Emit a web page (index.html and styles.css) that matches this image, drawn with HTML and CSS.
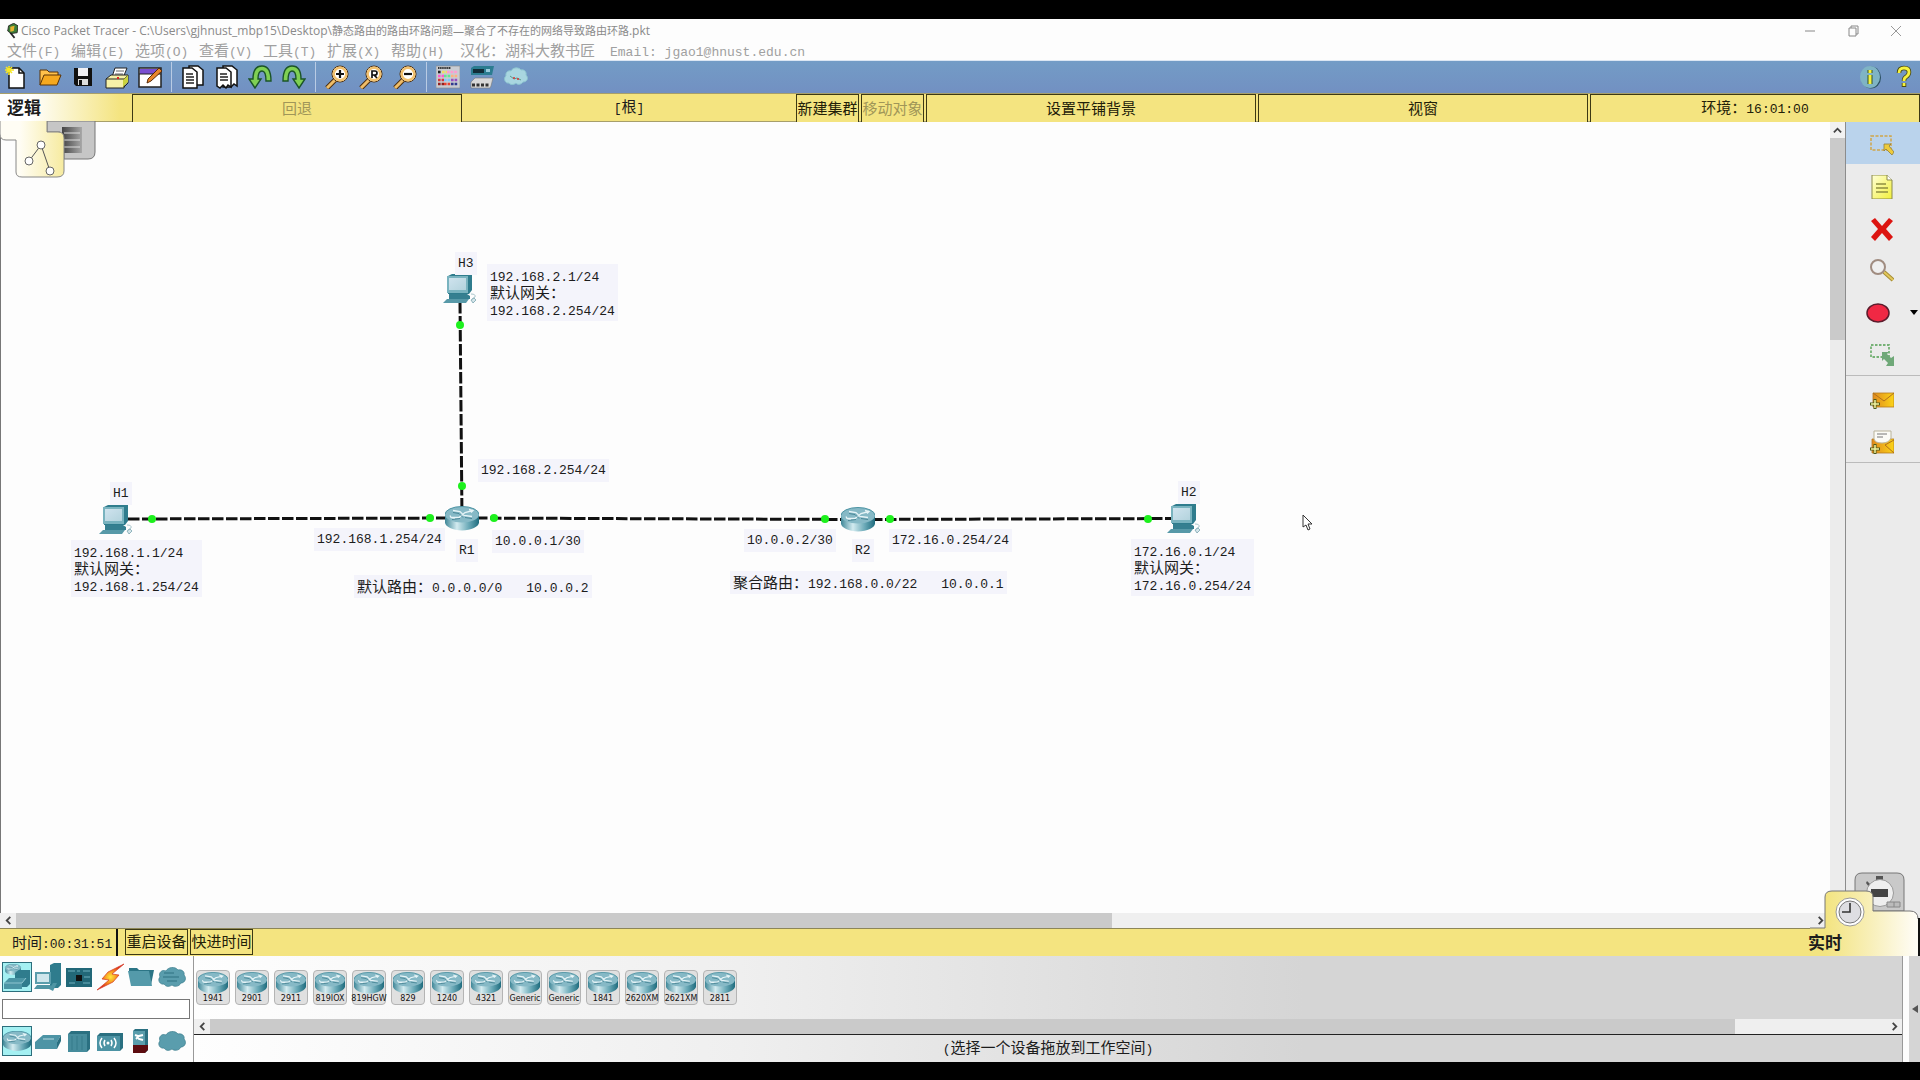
FILE: index.html
```html
<!DOCTYPE html>
<html lang="zh-CN">
<head>
<meta charset="utf-8">
<title>Cisco Packet Tracer</title>
<link rel="stylesheet" href="styles.css">
</head>
<body>
<svg class="defs" aria-hidden="true">
  <defs>
    <linearGradient id="teal" x1="0" x2="1" y1="0" y2="0"><stop offset="0" stop-color="#3f8798"/><stop offset=".35" stop-color="#d3ebf0"/><stop offset=".7" stop-color="#6aa9b7"/><stop offset="1" stop-color="#1f6c7e"/></linearGradient>
    <linearGradient id="screen" x1="0" x2="1" y1="0" y2="1"><stop offset="0" stop-color="#cfe3ee"/><stop offset="1" stop-color="#b3d3dd"/></linearGradient>
    <linearGradient id="note" x1="0" x2="1" y1="0" y2="1"><stop offset="0" stop-color="#ffffd8"/><stop offset="1" stop-color="#f2f03a"/></linearGradient>
    <linearGradient id="mail" x1="0" x2="1" y1="0" y2="0"><stop offset="0" stop-color="#e08a1e"/><stop offset="1" stop-color="#fbd418"/></linearGradient>
    <radialGradient id="spark"><stop offset="0" stop-color="#ffe93a"/><stop offset=".5" stop-color="#f58a1c"/><stop offset="1" stop-color="#d9251c"/></radialGradient>
    <linearGradient id="tabLeft" gradientUnits="userSpaceOnUse" x1="20" x2="66" y1="0" y2="0"><stop offset="0" stop-color="#fffdf4"/><stop offset="1" stop-color="#f6ea9c"/></linearGradient>
    <linearGradient id="tabRight" gradientUnits="userSpaceOnUse" x1="1825" x2="1915" y1="0" y2="0"><stop offset="0" stop-color="#f3e480"/><stop offset=".5" stop-color="#f8efb8"/><stop offset="1" stop-color="#fefcf4"/></linearGradient>
    <linearGradient id="stack" x1="0" x2="1" y1="0" y2="0"><stop offset="0" stop-color="#444"/><stop offset="1" stop-color="#a8a8a8"/></linearGradient>
  </defs>
  <symbol id="router" viewBox="0 0 34 24">
    <path d="M0 8v8c0 4 8 8 17 8s17-4 17-8V8z" fill="url(#teal)"/>
    <ellipse cx="17" cy="8" rx="17" ry="8" fill="#86b9c6"/>
    <path d="M0 8a17 8 0 0 1 34 0" fill="none" stroke="#4c93a3"/>
    <path d="M8 4l7 1 4 4 8 1M6 11l8 0 6-5 8-2M24 3l4 1-2 2M5 9l1 2 4 1" fill="none" stroke="#e6f4f7" stroke-width="1.300"/>
    <path d="M8 6l6 1 4 4M20 11l7 1M7 13l8-1" fill="none" stroke="#39798a" stroke-width=".8"/>
  </symbol>
  <symbol id="pc" viewBox="0 0 34 30">
    <path d="M5 2l4-2h20v16l-3 4H5z" fill="#2f7c8d"/>
    <path d="M4 2h21v17H4z" fill="#79b3bf"/>
    <path d="M6 4h17v12H6z" fill="url(#screen)"/>
    <path d="M6 20h18l3 2v3H6z" fill="#357f90"/>
    <path d="M4 25h22l-3 4H0z" fill="#5799a8"/>
    <path d="M28 20q5 0 4 3l-3 2" fill="none" stroke="#a9c6cc"/><path d="M28 26l3-2 2 2-3 3z" fill="#d5e6ea" stroke="#6b9ba6" stroke-width=".7"/>
  </symbol>
  <symbol id="cloud" viewBox="0 0 28 20"><path d="M6 17C2 18-1 13 2 10 0 6 4 2 8 4c2-4 9-5 12-1 4-1 7 2 6 5 3 3 1 8-3 8-2 4-7 4-9 2-3 2-6 2-8-1z" fill="#5a9dad" stroke="#3a7d8d" stroke-width=".7"/></symbol>
  <symbol id="glass" viewBox="0 0 24 24"><path d="M11 14L2 23" stroke="#4c2d0c" stroke-width="5"/><path d="M11 14L2 23" stroke="#efbd68" stroke-width="3"/><circle cx="15" cy="9" r="8" fill="#fff" stroke="#4c2d0c"/><circle cx="15" cy="9" r="6.300" fill="#fff" stroke="#f2c16d" stroke-width="2.400"/></symbol>
  <symbol id="turn" viewBox="0 0 24 24"><path d="M7 23L1 14h4c0-9 3-13 9-13s9 5 9 15h-5c0-7-1-10-4-10s-4 3-4 8h3z" fill="#7fd053" stroke="#1b5428" stroke-width="1.400"/></symbol>
</svg>

<div class="app">
  <header class="titlebar">
    <svg class="logo" viewBox="0 0 14 18"><path d="M3 3l6-3 5 3-1 8-7 1-4-3z" fill="#3d7d37" stroke="#222"/><path d="M5 4l5-1-1 6-4 1z" fill="#e8b530"/><path d="M5 11l5 6" stroke="#222" stroke-width="2"/></svg>
    <h1 class="title">Cisco Packet Tracer - C:\Users\gjhnust_mbp15\Desktop\<span class="title-cjk">静态路由的路由环路问题—聚合了不存在的网络导致路由环路</span>.pkt</h1>
    <div class="controls">
      <button aria-label="最小化"><svg viewBox="0 0 12 12"><path d="M1 6h10" stroke="#888"/></svg></button>
      <button aria-label="还原"><svg viewBox="0 0 12 12"><path d="M2 3h7v8H2zM4 3V1h7v8H9" fill="none" stroke="#888"/></svg></button>
      <button aria-label="关闭"><svg viewBox="0 0 12 12"><path d="M1 1l10 10M11 1L1 11" stroke="#999"/></svg></button>
    </div>
  </header>

  <nav class="menubar">
    <button>文件<span class="m">(F)</span></button>
    <button>编辑<span class="m">(E)</span></button>
    <button>选项<span class="m">(O)</span></button>
    <button>查看<span class="m">(V)</span></button>
    <button>工具<span class="m">(T)</span></button>
    <button>扩展<span class="m">(X)</span></button>
    <button>帮助<span class="m">(H)</span></button>
    <button class="credit">汉化：湖科大教书匠</button>
    <button class="email"><span class="m">Email: jgao1@hnust.edu.cn</span></button>
  </nav>

  <div class="toolbar">
    <div class="group g5">
      <button aria-label="新建"><svg viewBox="0 0 24 24"><path d="M5 3h10l5 5v15H5z" fill="#fff" stroke="#111" stroke-width="1.500"/><path d="M15 3v5h5" fill="none" stroke="#111" stroke-width="1.500"/><path d="M5 1v9M1 5h9M2 2l6 6M8 2L2 8" stroke="#f7e823" stroke-width="1.600"/></svg></button>
      <button aria-label="打开"><svg viewBox="0 0 24 24"><path d="M2 20V5h7l2 2h9v4" fill="#ffc14b" stroke="#5a3206"/><path d="M2 20l4-10h17l-4 10z" fill="#f6a91f" stroke="#5a3206"/></svg></button>
      <button aria-label="保存"><svg viewBox="0 0 24 24"><path d="M3 3h18v18H5l-2-2z" fill="#111"/><path d="M7 3h10v8H7z" fill="#f0f0f4"/><path d="M7 14h10v6H7z" fill="#ddd"/><path d="M8 15h3v5H8z" fill="#111"/></svg></button>
      <button aria-label="打印"><svg viewBox="0 0 24 24"><path d="M7 12l3-9h12l-4 10" fill="#fff" stroke="#222"/><path d="M11 6h8M10 9h8" stroke="#666"/><path d="M1 14l5-4h17l-4 5v8H1z" fill="#f6f1a8" stroke="#222"/><path d="M1 14h18v8M19 14l4-4v8l-4 4" fill="none" stroke="#222"/><path d="M18 15l5-5v7l-5 5z" fill="#c9d13c"/><path d="M12 13h2" stroke="#d22" stroke-width="2"/></svg></button>
      <button aria-label="活动向导"><svg viewBox="0 0 24 24"><path d="M1 3h22v19H1z" fill="#fff" stroke="#222" stroke-width="1.500"/><path d="M2 4h20v5H2z" fill="#7a4fd0"/><path d="M1 9h22" stroke="#222"/><path d="M21 3L10 14l-1 4 4-2L24 6z" fill="#e8872c" stroke="#5a2a08"/></svg></button>
    </div>
    <span class="sep"></span>
    <div class="group g4">
      <button aria-label="复制"><svg viewBox="0 0 24 24"><path d="M8 1h9l5 4v15H8z" fill="#fff" stroke="#111" stroke-width="1.500"/><path d="M2 3h9l5 4v16H2z" fill="#fff" stroke="#111" stroke-width="1.500"/><path d="M5 9h7M5 12h8M5 15h8M5 18h8" stroke="#222" stroke-width="1.300"/></svg></button>
      <button aria-label="粘贴"><svg viewBox="0 0 24 24"><path d="M8 1h9l5 4v16l-3-2-3 3H8z" fill="#fff" stroke="#111" stroke-width="1.500"/><path d="M2 3h9l5 4v15l-3-2-2 3-3-3-3 3-3-2z" fill="#fff" stroke="#111" stroke-width="1.500"/><path d="M5 9h7M5 12h8M5 15h8" stroke="#222" stroke-width="1.300"/></svg></button>
      <button aria-label="撤销"><svg viewBox="0 0 24 24"><use href="#turn"/></svg></button>
      <button aria-label="重做"><svg viewBox="0 0 24 24"><use href="#turn" transform="translate(24 0) scale(-1 1)"/></svg></button>
    </div>
    <span class="sep"></span>
    <div class="group g3">
      <button aria-label="放大"><svg viewBox="0 0 24 24"><use href="#glass"/><path d="M15 5v8M11 9h8" stroke="#111" stroke-width="2.200"/></svg></button>
      <button aria-label="缩放重置"><svg viewBox="0 0 24 24"><use href="#glass"/><path d="M13 13V6h3q2 0 2 2t-2 2h-3M15 10l3 3" fill="none" stroke="#111" stroke-width="1.700"/></svg></button>
      <button aria-label="缩小"><svg viewBox="0 0 24 24"><use href="#glass"/><path d="M11 9h8" stroke="#111" stroke-width="2.200"/></svg></button>
    </div>
    <span class="sep"></span>
    <div class="group g3">
      <button aria-label="调色板"><svg viewBox="0 0 24 24"><path d="M0 1h24v22H0z" fill="#c9ccd2" stroke="#888" stroke-width=".6"/><path d="M2 3h13" stroke="#333" stroke-width="2" stroke-dasharray="1.500 .6"/><g stroke-width="2.600" stroke-dasharray="2.600 1"><path d="M2 7h3" stroke="#222"/><path d="M6 7h5" stroke="#f0e060"/><path d="M11 7h11" stroke="#ff9ad0"/><path d="M2 11h6" stroke="#ff5ad0"/><path d="M8 11h7" stroke="#60e890"/><path d="M15 11h7" stroke="#ffb080"/><path d="M2 15h6" stroke="#d03a3a"/><path d="M8 15h7" stroke="#7bc8ff"/><path d="M15 15h7" stroke="#9a50c0"/><path d="M2 19h6" stroke="#902020"/><path d="M8 19h7" stroke="#e84030"/><path d="M15 19h7" stroke="#303a90"/></g></svg></button>
      <button aria-label="自定义设备"><svg viewBox="0 0 24 24"><path d="M1 3l3-2h20l-2 9H1z" fill="#2b7c90"/><path d="M3 4h11v4H3z" fill="#112c38"/><path d="M16 4h4v3h-4z" fill="#9cd"/><path d="M1 17l4-4h18l-2 8-1 2H1z" fill="#d8d8d8" stroke="#777" stroke-width=".6"/><path d="M2 20h17" stroke="#333" stroke-width="3" stroke-dasharray="3 1.500"/></svg></button>
      <button aria-label="云"><svg viewBox="0 0 24 24"><path d="M5 18c-4 1-6-5-3-7-1-4 3-6 5-5 2-4 8-4 10-1 3-1 6 2 5 5 3 3 1 7-3 7-2 3-6 3-7 1-2 2-6 2-7 0z" fill="#a9d6e0" stroke="#8cc4d0"/><path d="M6 11l4 3 3-1 4 2" fill="none" stroke="#5a9a8a"/><circle cx="10" cy="13" r="1" fill="#d33"/><circle cx="14" cy="14" r="1" fill="#d33"/></svg></button>
    </div>
    <div class="help">
      <button aria-label="信息"><svg viewBox="0 0 24 24"><ellipse cx="13" cy="12.500" rx="10" ry="11" fill="#2a5060"/><ellipse cx="12" cy="12" rx="10" ry="11" fill="#7fb4c4"/><path d="M12 5v3M12 10v9" stroke="#33502a" stroke-width="5"/><path d="M12 5v3M12 10v9" stroke="#f4f23a" stroke-width="3"/></svg></button>
      <button aria-label="帮助"><svg viewBox="0 0 24 24"><g fill="none"><path d="M7 8q0-5 5-5t5 4q0 3-3 5-2 1-2 4M12 18v4" stroke="#4a4a14" stroke-width="4.500"/><path d="M7 8q0-5 5-5t5 4q0 3-3 5-2 1-2 4M12 18v3" stroke="#f6f23e" stroke-width="2.800"/></g></svg></button>
    </div>
  </div>

  <nav class="viewbar">
    <strong class="mode">逻辑</strong>
    <button class="box" disabled>回退</button>
    <span class="root"><span class="m">[</span>根<span class="m">]</span></span>
    <button class="box">新建集群</button>
    <button class="box" disabled>移动对象</button>
    <button class="box">设置平铺背景</button>
    <button class="box">视窗</button>
    <button class="box">环境：<span class="m">16:01:00</span></button>
  </nav>

  <div class="stage">
    <main class="work">
      <section class="canvas">
        <svg class="links" viewBox="0 122 1829 791" preserveAspectRatio="xMinYMin slice">
          <g stroke="#111" stroke-width="3" stroke-dasharray="11.500 2.500" fill="none">
            <path d="M128 519L462 518"/><path d="M462 518L857 519.500"/><path d="M857 519.500L1180 518.500"/><path d="M460 302L462 518"/>
          </g>
          <g fill="#1df01d"><circle cx="152" cy="519" r="4"/><circle cx="430" cy="518" r="4"/><circle cx="494" cy="518" r="4"/><circle cx="825" cy="519" r="4"/><circle cx="890" cy="519" r="4"/><circle cx="1148" cy="519" r="4"/><circle cx="460" cy="325" r="4"/><circle cx="462" cy="486" r="4"/></g>
          <use href="#pc" x="443" y="274" width="34" height="30"/>
          <use href="#pc" x="99" y="505" width="34" height="30"/>
          <use href="#pc" x="1167" y="504" width="34" height="30"/>
          <use href="#router" x="445" y="506" width="34" height="25"/>
          <use href="#router" x="841" y="507" width="34" height="25"/>
          <path d="M1303 515v12l3-2 2 5 2-1-2-5h4z" fill="#fff" stroke="#333"/>
        </svg>
        <div class="label h3 m">H3</div>
        <div class="label h3-ip"><span class="m">192.168.2.1/24</span><br>默认网关：<br><span class="m">192.168.2.254/24</span></div>
        <div class="label r1-up m">192.168.2.254/24</div>
        <div class="label h1 m">H1</div>
        <div class="label h1-ip"><span class="m">192.168.1.1/24</span><br>默认网关：<br><span class="m">192.168.1.254/24</span></div>
        <div class="label r1-left m">192.168.1.254/24</div>
        <div class="label r1 m">R1</div>
        <div class="label r1-right m">10.0.0.1/30</div>
        <div class="label r1-route"><span>默认路由：<span class="m">0.0.0.0/0</span></span><span class="m">10.0.0.2</span></div>
        <div class="label r2-left m">10.0.0.2/30</div>
        <div class="label r2 m">R2</div>
        <div class="label r2-right m">172.16.0.254/24</div>
        <div class="label r2-route"><span>聚合路由：<span class="m">192.168.0.0/22</span></span><span class="m">10.0.0.1</span></div>
        <div class="label h2 m">H2</div>
        <div class="label h2-ip"><span class="m">172.16.0.1/24</span><br>默认网关：<br><span class="m">172.16.0.254/24</span></div>
      </section>
      <div class="vscroll">
        <button aria-label="向上"><svg viewBox="0 0 10 10"><path d="M1 7l4-4 4 4" fill="none" stroke="#444" stroke-width="2"/></svg></button>
        <div class="thumb"></div>
      </div>
      <div class="hscroll">
        <button aria-label="向左"><svg viewBox="0 0 10 10"><path d="M7 1L3 5l4 4" fill="none" stroke="#444" stroke-width="2"/></svg></button>
        <div class="rail"><div class="thumb"></div></div>
        <button aria-label="向右"><svg viewBox="0 0 10 10"><path d="M3 1l4 4-4 4" fill="none" stroke="#444" stroke-width="2"/></svg></button>
      </div>
      <aside class="tools">
        <button class="on" aria-label="选择"><svg viewBox="0 0 24 24"><path d="M1 3h20v14H1z" fill="none" stroke="#d0a64a" stroke-width="1.500" stroke-dasharray="3 1.500"/><path d="M14 11h7l-2 2 5 6-2 3-6-6-2 2z" fill="#eecb3c" stroke="#8f7d3c" stroke-width=".8"/></svg></button>
        <button aria-label="便签"><svg viewBox="0 0 24 24"><path d="M2 0h15l5 5v19H2z" fill="url(#note)" stroke="#8b8b4a"/><path d="M17 0v5h5" fill="#fff" stroke="#8b8b4a"/><path d="M6 9h10M6 13h12M6 17h12" stroke="#8f8f40" stroke-width="1.300"/></svg></button>
        <button aria-label="删除"><svg viewBox="0 0 24 24"><path d="M1 4l4-3 7 8 7-8 4 3-7 8 7 8-4 4-7-8-7 8-4-4 7-8z" fill="#dc1410"/></svg></button>
        <button aria-label="查看"><svg viewBox="0 0 24 24"><path d="M14 13l9 8" stroke="#a58c33" stroke-width="4"/><path d="M14 13l9 8" stroke="#e3c85c" stroke-width="2"/><circle cx="8" cy="8" r="7" fill="#efefef" stroke="#a08c80" stroke-width="2"/></svg></button>
        <button class="shape" aria-label="画图"><svg viewBox="0 0 24 24"><ellipse cx="12" cy="12" rx="11" ry="9" fill="#f02844" stroke="#5c1c2c" stroke-width="1.500"/></svg><svg class="caret" viewBox="0 0 8 5"><path d="M0 0h8L4 5z"/></svg></button>
        <button aria-label="调整大小"><svg viewBox="0 0 24 24"><path d="M1 2h18v12H1z" fill="none" stroke="#76b276" stroke-width="1.800" stroke-dasharray="2.500 1.500"/><path d="M12 9h7l-2 2 4 4 3-2v10h-8l2-3-4-4-2 2z" fill="#6fa878"/></svg></button>
        <hr>
        <button aria-label="简单报文"><svg viewBox="0 0 24 24"><path d="M3 5h21v14H3z" fill="url(#mail)" stroke="#b57a1c" stroke-width=".8"/><path d="M3 5l11 8 10-8" fill="none" stroke="#b06f1d"/><path d="M5 11v10M0 16h10" stroke="#4c5a1c" stroke-width="3"/><path d="M5 12v8M1 16h8" stroke="#f3f3a0" stroke-width="1.500"/></svg></button>
        <button aria-label="复杂报文"><svg viewBox="0 0 24 24"><path d="M2 9h22v14H2z" fill="url(#mail)" stroke="#b57a1c" stroke-width=".8"/><path d="M4 1h17v7q-2 5-9 5T4 9z" fill="#fbfbf6" stroke="#b9b39a"/><path d="M7 4h10M7 7h6" stroke="#777"/><path d="M24 10l-9 5 9 8" fill="none" stroke="#b06f1d"/><path d="M5 14v10M0 19h10" stroke="#4c5a1c" stroke-width="3"/><path d="M5 15v8M1 19h8" stroke="#f3f3a0" stroke-width="1.500"/></svg></button>
        <hr>
      </aside>
    </main>

    <div class="timebar">
      <span class="clock">时间<span class="m">:00:31:51</span></span>
      <button class="box">重启设备</button>
      <button class="box">快进时间</button>
      <strong class="live">实时</strong>
    </div>

    <svg class="tab-left" viewBox="0 121 100 60">
      <path d="M47 121v11h13l4 5v22h24q7 0 7-7v-31z" fill="#c6c6c6" stroke="#777"/>
      <path d="M62 127h20v26H62z" fill="url(#stack)"/><path d="M64 133h16M64 140h16M64 147h16" stroke="#ddd"/>
      <path d="M0 121v13q0 6 6 6h10v32q0 5 6 5h35q7 0 7-6v-33q0-6-6-6H47v-11z" fill="url(#tabLeft)"/>
      <path d="M0 121v13q0 6 6 6h10v32q0 5 6 5h35q7 0 7-6v-33q0-6-6-6H47v-11" fill="none" stroke="#888"/>
      <path d="M41 145L29 161M41 145l9 26" stroke="#555"/><g fill="#fff" stroke="#666"><circle cx="41" cy="145" r="4"/><circle cx="29" cy="161" r="4"/><circle cx="50" cy="171" r="4"/></g>
    </svg>

    <svg class="tab-right" viewBox="1810 870 110 86">
      <path d="M1855 911v-31q0-7 7-7h35q7 0 7 7v31z" fill="#c9c9c9" stroke="#777"/>
      <path d="M1876 876h7v5h-7zM1867 881l4 4-2 2-3-4z" fill="#555"/>
      <circle cx="1880" cy="893" r="13.500" fill="#eee" stroke="#999"/><path d="M1871 889h17v8h-17z" fill="#444"/><path d="M1887 902h13v5h-13zM1894 902v5" fill="#bbb" stroke="#888"/>
      <path d="M1810 928h15v-31q0-6 7-6h34q7 0 7 6v14h37q8 0 8 8v37h-108z" fill="url(#tabRight)"/>
      <path d="M1810 928h15v-31q0-6 7-6h34q7 0 7 6v14h37q8 0 8 8" fill="none" stroke="#777"/>
      <path d="M1919 918v38" stroke="#111" stroke-width="2"/>
      <circle cx="1850" cy="912" r="14" fill="#fff" stroke="#999"/><circle cx="1850" cy="912" r="11" fill="#dedee2" stroke="#777"/><path d="M1850 903v9h-8" fill="none" stroke="#333" stroke-width="1.600"/>
    </svg>
  </div>

  <footer class="dock">
    <div class="kinds">
      <div class="row">
        <button class="on" aria-label="网络设备"><svg viewBox="0 0 28 28"><use href="#router" x="1" y="1" width="18" height="11"/><path d="M12 10l4-3h11v14l-3 3H12z" fill="#2f7c8d"/><path d="M1 20l5-5h17l-4 5v6H1z" fill="#4b95a5"/><path d="M1 20h18l4-5" fill="none" stroke="#8fc4cf"/></svg></button>
        <button aria-label="终端设备"><svg viewBox="0 0 28 28"><path d="M16 2l4-2h7v22l-3 3h-8z" fill="#2f7c8d"/><path d="M1 9h16v12H1z" fill="#5a9dac"/><path d="M3 11h12v8H3z" fill="#cfe6ec"/><path d="M3 22h13l2 2-3 2H0zM15 26l4-6h4l-4 8z" fill="#4f95a4"/></svg></button>
        <button aria-label="组件"><svg viewBox="0 0 28 28"><path d="M1 5h26v19H1z" fill="#226878"/><path d="M3 8h7M18 8h7M4 20h6M19 14h6M18 20h7M12 8h3" stroke="#6fb0be"/><path d="M11 12h6v6h-6z" fill="#111"/></svg></button>
        <button aria-label="连接"><svg viewBox="0 0 28 28"><path d="M28 1L12 9 6 16l7 1L1 27l16-8 6-7-7-1z" fill="url(#spark)" stroke="#d43a22" stroke-width=".7"/></svg></button>
        <button aria-label="杂项"><svg viewBox="0 0 28 28"><path d="M2 8V5h8l2 2h15l-3 15z" fill="#2c7586"/><path d="M1 8h21l3 15H4z" fill="#549aaa"/></svg></button>
        <button aria-label="多用户连接"><svg viewBox="0 0 28 28"><use href="#cloud" x="0" y="4" width="28" height="20"/><path d="M6 10h10M5 14h16M9 18h10" stroke="#2f7282" stroke-width="1.200"/></svg></button>
      </div>
      <input type="text" aria-label="搜索设备">
      <div class="row">
        <button class="on" aria-label="路由器"><svg viewBox="0 0 28 28"><use href="#router" x="0" y="4" width="28" height="20"/></svg></button>
        <button aria-label="交换机"><svg viewBox="0 0 28 28"><path d="M1 15l8-7h18l-4 7v7H1z" fill="#4d94a5"/><path d="M23 15l4-7v6l-4 8z" fill="#2a7081"/><path d="M9 12h11" stroke="#b7dae2"/></svg></button>
        <button aria-label="集线器"><svg viewBox="0 0 28 28"><path d="M3 7l3-3h19v18l-3 3H3z" fill="#2a7081"/><path d="M3 7h19v18H3z" fill="#468c9c"/><path d="M7 9v14M12 9v14M17 9v14" stroke="#357a8a"/></svg></button>
        <button aria-label="无线设备"><svg viewBox="0 0 28 28"><path d="M1 9l3-3h23v15l-3 3H1z" fill="#2a7081"/><path d="M1 9h23v15H1z" fill="#4c93a4"/><path d="M6 11q-4 5 0 10M9 13q-2 3 0 6M18 11q4 5 0 10M15 13q2 3 0 6" fill="none" stroke="#fff" stroke-width="1.500"/><circle cx="12" cy="16" r="1.500" fill="#fff"/></svg></button>
        <button aria-label="安全设备"><svg viewBox="0 0 28 28"><path d="M6 4l2-2h13v21l-3 3H6z" fill="#2a7081"/><path d="M6 4h12v14H6z" fill="#5a9dac"/><path d="M6 18h15v5l-3 3H6z" fill="#5c0c10"/><path d="M8 8l3 1 1 3 4 1M9 12l3-3 4-1" fill="none" stroke="#fff" stroke-width="2"/></svg></button>
        <button aria-label="广域网"><svg viewBox="0 0 28 28"><use href="#cloud" x="0" y="4" width="28" height="20"/></svg></button>
      </div>
    </div>
    <div class="tray">
      <div class="devices">
        <button><svg><use href="#router"/></svg>1941</button>
        <button><svg><use href="#router"/></svg>2901</button>
        <button><svg><use href="#router"/></svg>2911</button>
        <button><svg><use href="#router"/></svg>819IOX</button>
        <button><svg><use href="#router"/></svg>819HGW</button>
        <button><svg><use href="#router"/></svg>829</button>
        <button><svg><use href="#router"/></svg>1240</button>
        <button><svg><use href="#router"/></svg>4321</button>
        <button><svg><use href="#router"/></svg>Generic</button>
        <button><svg><use href="#router"/></svg>Generic</button>
        <button><svg><use href="#router"/></svg>1841</button>
        <button><svg><use href="#router"/></svg>2620XM</button>
        <button><svg><use href="#router"/></svg>2621XM</button>
        <button><svg><use href="#router"/></svg>2811</button>
      </div>
      <div class="hscroll">
        <button aria-label="向左"><svg viewBox="0 0 10 10"><path d="M7 1L3 5l4 4" fill="none" stroke="#444" stroke-width="2"/></svg></button>
        <div class="rail wide"><div class="thumb"></div></div>
        <button aria-label="向右"><svg viewBox="0 0 10 10"><path d="M3 1l4 4-4 4" fill="none" stroke="#444" stroke-width="2"/></svg></button>
      </div>
      <p class="status"><span class="m">(</span>选择一个设备拖放到工作空间<span class="m">)</span></p>
    </div>
    <button class="expand" aria-label="展开"><svg viewBox="0 0 6 8"><path d="M6 0v8L0 4z" fill="#555"/></svg></button>
  </footer>
</div>
</body>
</html>
```
FILE: styles.css
```css
* { box-sizing: border-box; }

body {
  margin: 0;
  background: #000;
  color: #1c1c1c;
  font: 15px/18px "Liberation Sans", "Noto Sans CJK SC", sans-serif;
}

button {
  padding: 0;
  border: 0;
  background: none;
  color: inherit;
  font: inherit;
  white-space: nowrap;
}

svg { display: block; }
.defs { position: absolute; width: 0; height: 0; }
.m { font-family: "Liberation Mono", "Noto Sans CJK SC", monospace; font-size: 13px; }

.app {
  display: flex;
  flex-direction: column;
  min-height: 100vh;
  padding: 19px 0 18px;
}

/* title and menus */
.titlebar {
  display: flex;
  align-items: center;
  height: 23px;
  padding: 0 14px 0 6px;
  background: #fdfdfd;
  color: #8a8a8a;
}
.logo { width: 12px; height: 16px; }
.title {
  flex: 1;
  margin: 0 0 0 3px;
  font: 12px/18px "Open Sans", "Noto Sans CJK SC", sans-serif;
  white-space: nowrap;
}
.title-cjk { font-size: 11px; }
.controls { display: flex; }
.controls button { display: grid; place-items: center; width: 43px; height: 20px; }
.controls button:last-child { width: 32px; padding-left: 12px; }
.controls svg { width: 12px; height: 12px; }

.menubar {
  display: flex;
  height: 19px;
  padding-left: 7px;
  border-bottom: 1px solid #dbe6f3;
  background: #fdfdfd;
  color: #a0a0a0;
}
.menubar button { width: 64px; text-align: left; }
.menubar .credit { width: 150px; margin-left: 5px; }
.menubar .email { width: auto; }

/* icon toolbar */
.toolbar {
  display: flex;
  align-items: center;
  gap: 9px;
  height: 32px;
  padding: 0 4px;
  background: linear-gradient(#739cc6, #7290c2);
}
.toolbar svg { width: 24px; height: 24px; }
.group { display: flex; justify-content: space-between; }
.g5 { width: 158px; }
.g4 { width: 125px; }
.g3 { width: 92px; }
.sep { width: 1px; height: 30px; background: #b9cbe4; }
.help { display: flex; gap: 10px; margin-left: auto; }

/* yellow view bar */
.viewbar {
  display: grid;
  grid-template-columns: 130px 1fr 1fr 63px 63px 1fr 1fr 1fr;
  gap: 2px;
  height: 29px;
  padding-bottom: 1px;
  border-top: 1px solid #a79f6a;
  border-bottom: 1px solid #a79f6a;
  background: linear-gradient(90deg, #fff 30px, #f4e480 120px);
  text-align: center;
  line-height: 26px;
}
.mode { padding-left: 7px; text-align: left; font-size: 17px; font-weight: 600; line-height: 29px; }
.box { border: 1px solid #3c3914; background: #f4e480; color: #222008; }
.box:disabled { color: #a09658; }

/* workspace */
.stage { position: relative; display: flex; flex: 1; flex-direction: column; }
.work {
  display: grid;
  flex: 1;
  grid-template: minmax(0, 1fr) 15px / minmax(0, 1fr) 15px 75px;
}
.canvas { position: relative; overflow: hidden; border-left: 1px solid #777; background: #fdfdfd; }
.links { position: absolute; top: 0; left: -1px; width: 1829px; height: 791px; }
.label {
  position: absolute;
  padding: 3px;
  background: #f4f4fb;
  line-height: 17px;
  white-space: nowrap;
}
.label .m { line-height: 0; }
.h3 { left: 454px; top: 130px; }
.h3-ip { left: 486px; top: 142px; }
.r1-up { left: 477px; top: 337px; }
.h1 { left: 109px; top: 360px; }
.h1-ip { left: 70px; top: 418px; }
.r1-left { left: 313px; top: 406px; }
.r1 { left: 455px; top: 417px; }
.r1-right { left: 491px; top: 408px; }
.r1-route, .r2-route { display: flex; align-items: baseline; gap: 24px; }
.r1-route { left: 353px; top: 453px; }
.r2-left { left: 743px; top: 407px; }
.r2 { left: 851px; top: 417px; }
.r2-right { left: 888px; top: 407px; }
.r2-route { left: 729px; top: 449px; }
.h2 { left: 1177px; top: 359px; }
.h2-ip { left: 1130px; top: 417px; }

.vscroll { grid-row: 1 / 3; grid-column: 2; background: #ececec; }
.vscroll button { display: grid; place-items: center; width: 15px; height: 16px; background: #f2f2f2; }
.vscroll svg, .hscroll svg { width: 9px; height: 9px; }
.vscroll .thumb { height: 25%; background: #cacaca; }
.hscroll { display: flex; height: 15px; background: #efefef; }
.work .hscroll { padding-right: 2px; }
.hscroll button { display: grid; place-items: center; width: 16px; }
.rail { flex: 1; }
.rail .thumb { width: 61%; height: 100%; background: #cacaca; }
.wide .thumb { width: 91%; }

.tools {
  grid-row: 1 / 3;
  grid-column: 3;
  display: flex;
  flex-direction: column;
  border-left: 1px solid #8c8c8c;
  background: #ebebeb;
}
.tools button { display: grid; place-items: center; height: 42px; padding: 3px 2px 0 0; }
.tools .on { background: #bad3ec; }
.tools svg { width: 24px; height: 24px; }
.tools .shape { grid-template-columns: 20px 24px 1fr 8px; justify-items: start; }
.tools .shape svg:first-child { grid-column: 2; }
.tools .shape .caret { grid-column: 4; width: 8px; height: 5px; }
.tools hr { width: 100%; margin: 1px 0; border: 0; border-top: 1px solid #bbb; }

.tab-left { position: absolute; top: -1px; left: 0; width: 100px; height: 60px; }
.tab-right { position: absolute; right: 0; bottom: 0; width: 110px; height: 86px; }

.timebar {
  display: flex;
  height: 28px;
  border-top: 1px solid #8d8658;
  background: #f4e480;
}
.clock { width: 118px; padding-left: 12px; border-right: 2px solid #111; line-height: 27px; white-space: nowrap; }
.timebar .box { width: 63px; margin: 0 2px 1px 0; }
.clock + .box { margin-left: 7px; }
.live { z-index: 1; margin: 0 78px 0 auto; font-size: 17px; line-height: 29px; }

/* device dock */
.dock { display: grid; grid-template-columns: 193px minmax(0, 1fr) 11px; height: 106px; background: #fdfdfd; }
.kinds { display: flex; flex-direction: column; gap: 7px; padding: 6px 3px 6px 2px; }
.row { display: flex; gap: 1px; }
.row button { display: grid; place-items: center; width: 30px; height: 30px; }
.row svg { width: 28px; height: 28px; }
.row .on { border: 1px solid #2c6e7c; background: #a4f0f2; }
.kinds input { width: 100%; height: 20px; border: 1px solid #777; background: #fff; }

.tray {
  display: flex;
  flex-direction: column;
  margin-right: 6px;
  border: 1px solid #999;
  border-width: 0 1px;
  background: linear-gradient(90deg, #fefefe, #efefef 32%, #d5d5d5 65%);
}
.devices { display: flex; flex: 1; gap: 5px; padding: 14px 2px; }
.devices button {
  display: flex;
  flex-direction: column;
  align-items: center;
  width: 34px;
  height: 35px;
  padding-top: 1px;
  border: 1px solid #b4b4b4;
  border-radius: 4px;
  background: #e0e0e0;
  color: #111;
  font: 8px/10px "DejaVu Sans", sans-serif;
}
.devices svg { flex: none; width: 30px; height: 22px; }
.status { height: 28px; margin: 0; border-top: 1px solid #222; line-height: 26px; text-align: center; }
.expand { display: grid; place-items: center; background: #d5d5d5; }
.expand svg { width: 6px; height: 8px; }
```
